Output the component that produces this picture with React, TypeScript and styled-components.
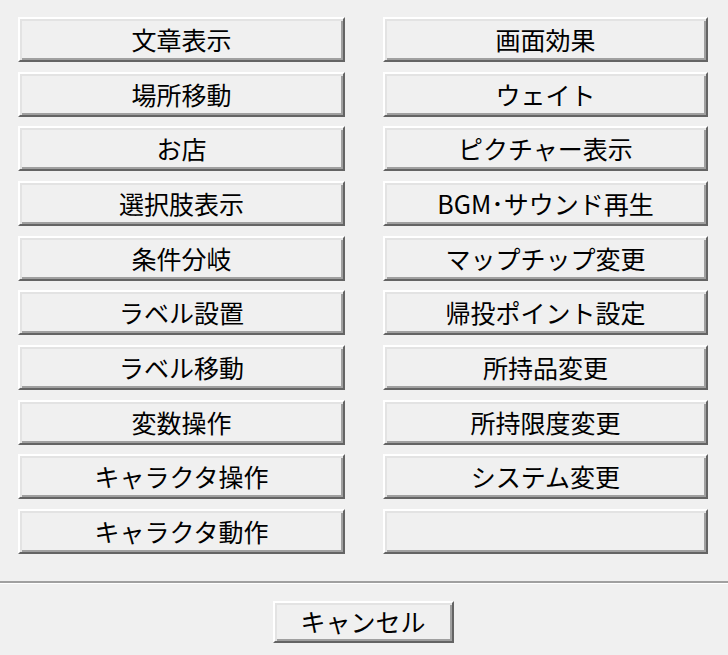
import styled, { createGlobalStyle } from 'styled-components'

const GlobalStyle = createGlobalStyle`
    html, body {
        margin: 0;
        padding: 0;
        background: #f0f0f0;
    }
    body {
        font-family: 'Noto Sans CJK JP', 'Noto Sans', sans-serif;
    }
`

const commands = [
    '文章表示',
    '画面効果',
    '場所移動',
    'ウェイト',
    'お店',
    'ピクチャー表示',
    '選択肢表示',
    'BGM･サウンド再生',
    '条件分岐',
    'マップチップ変更',
    'ラベル設置',
    '帰投ポイント設定',
    'ラベル移動',
    '所持品変更',
    '変数操作',
    '所持限度変更',
    'キャラクタ操作',
    'システム変更',
    'キャラクタ動作',
    '',
]

export default function App() {
    return (
        <>
            <GlobalStyle />
            <Dialog>
                <CommandGrid>
                    {commands.map((label, index) => (
                        <CommandButton key={index}>{label}</CommandButton>
                    ))}
                </CommandGrid>
                <Separator />
                <Footer>
                    <CancelButton>キャンセル</CancelButton>
                </Footer>
            </Dialog>
        </>
    )
}

const Dialog = styled.div`
    width: 728px;
    height: 655px;
    display: flex;
    flex-direction: column;
    box-sizing: border-box;
    padding-top: 17px;
`

const CommandGrid = styled.div`
    display: grid;
    grid-template-columns: 327px 325px;
    grid-auto-rows: 45px;
    column-gap: 38px;
    row-gap: 9.67px;
    padding-left: 18px;
`

const CommandButton = styled.button`
    box-sizing: border-box;
    margin: 0;
    padding: 0;
    background: #f0f0f0;
    border-style: solid;
    border-width: 2px;
    border-color: #ffffff #646464 #646464 #ffffff;
    box-shadow: inset 2px 2px 0 #e3e3e3, inset -2px -2px 0 #a0a0a0;
    font-family: 'Noto Sans CJK JP', 'Noto Sans', sans-serif;
    font-size: 25px;
    line-height: 1;
    color: #000;
    display: flex;
    align-items: center;
    justify-content: center;
    white-space: nowrap;
`

const Separator = styled.div`
    margin-top: 27px;
    height: 2px;
    background: #a0a0a0;
    border-bottom: 1px solid #ffffff;
`

const Footer = styled.div`
    display: flex;
    justify-content: center;
    padding-top: 17px;
`

const CancelButton = styled(CommandButton)`
    width: 181px;
    height: 42px;
    margin-right: 2px;
`
